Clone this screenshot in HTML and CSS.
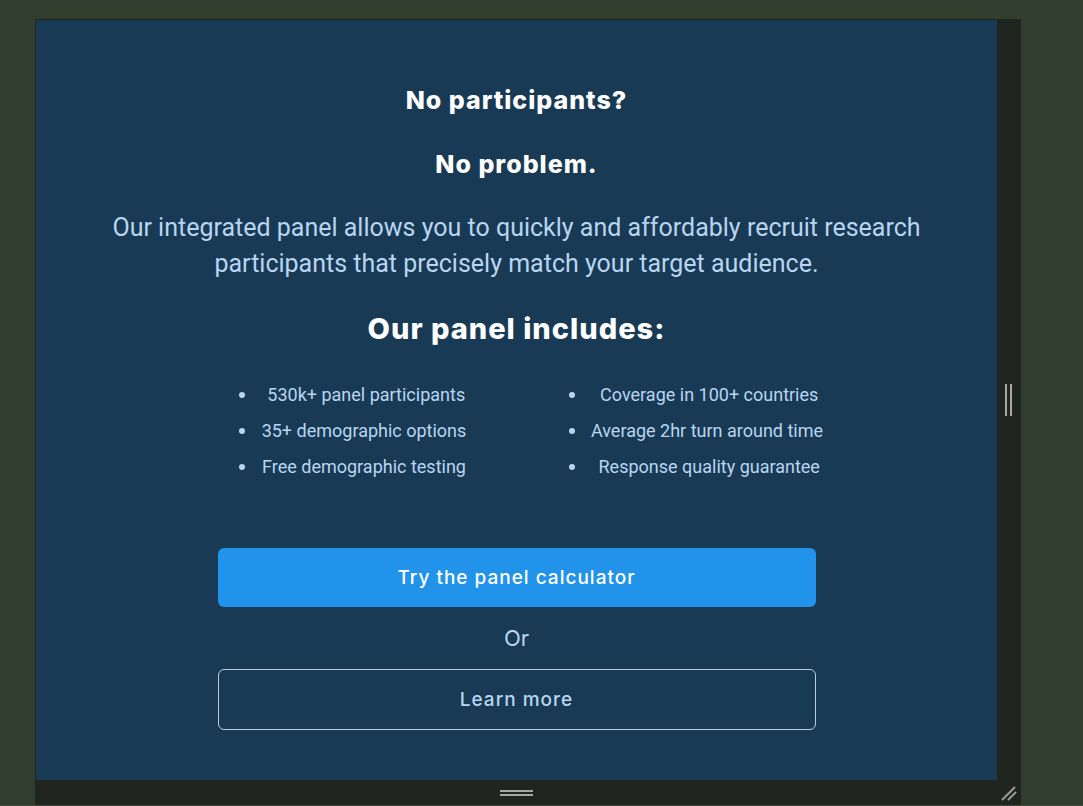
FILE: index.html
```html
<!DOCTYPE html>
<html>
<head>
<meta charset="utf-8">
<link rel="stylesheet" href="styles.css">
</head>
<body>
<div class="page">
  <div class="frame">
    <div class="main">
      <div class="panel">
        <h1 class="title">No participants?</h1>
        <h1 class="title title-second">No problem.</h1>
        <p class="lead">Our integrated panel allows you to quickly and affordably recruit research participants that precisely match your target audience.</p>
        <h2 class="subtitle">Our panel includes:</h2>
        <div class="lists">
          <ul class="list list-left">
            <li>&nbsp;530k+ panel participants</li>
            <li>35+ demographic options</li>
            <li>Free demographic testing</li>
          </ul>
          <ul class="list list-right">
            <li>&nbsp;Coverage in 100+ countries</li>
            <li>Average 2hr turn around time</li>
            <li>&nbsp;Response quality guarantee</li>
          </ul>
        </div>
        <a class="btn btn-primary">Try the panel calculator</a>
        <div class="or">Or</div>
        <a class="btn btn-outline">Learn more</a>
      </div>
      <div class="side">
        <span class="vgrip"></span>
      </div>
    </div>
    <div class="bottom">
      <span class="hgrip"></span>
      <svg class="resize" width="16" height="16" viewBox="0 0 16 16">
        <line x1="1" y1="15" x2="14" y2="2" stroke="#9a9c97" stroke-width="2"/>
        <line x1="7" y1="15" x2="15" y2="7" stroke="#9a9c97" stroke-width="2"/>
      </svg>
    </div>
  </div>
  <div class="baseline"></div>
</div>
</body>
</html>
```
FILE: styles.css
```css
html, body {
  margin: 0;
  padding: 0;
  background: #313e2e;
  height: 806px;
  overflow: hidden;
}
.page {
  display: flex;
  flex-direction: column;
  height: 806px;
  padding-top: 19px;
  box-sizing: border-box;
}
.frame {
  margin-left: 35px;
  width: 986px;
  height: 786px;
  background: #21251f;
  box-sizing: border-box;
  padding: 1px 0 0 1px;
  display: flex;
  flex-direction: column;
}
.main {
  display: flex;
  height: 760px;
}
.panel {
  width: 961px;
  height: 760px;
  background: #193a54;
  box-sizing: border-box;
  padding-top: 62px;
  display: flex;
  flex-direction: column;
  align-items: center;
  font-family: Roboto, "Liberation Sans", sans-serif;
}
.side {
  flex: 1;
  display: flex;
  align-items: center;
  justify-content: center;
}
.vgrip {
  display: block;
  width: 3px;
  height: 32px;
  border-left: 2px solid #a6a8a3;
  border-right: 2px solid #a6a8a3;
  margin-left: -1px;
}
.bottom {
  height: 25px;
  position: relative;
  display: flex;
  align-items: center;
  justify-content: center;
}
.hgrip {
  display: block;
  width: 33px;
  height: 2px;
  border-top: 2px solid #a6a8a3;
  border-bottom: 2px solid #a6a8a3;
  margin-left: -25px;
}
.resize {
  position: absolute;
  right: 4px;
  bottom: 4px;
}
.baseline {
  height: 1px;
  background: #45483f;
}
.title {
  margin: 0;
  font-family: Inter, "Open Sans", sans-serif;
  font-weight: 800;
  font-size: 25px;
  line-height: 36px;
  color: #ffffff;
  letter-spacing: 1px;
}
.title-second {
  margin-top: 28px;
}
.lead {
  margin: 28px 0 0;
  width: 860px;
  text-align: center;
  font-size: 25px;
  line-height: 36px;
  color: #b8d5f1;
}
.subtitle {
  margin: 27px 0 0;
  font-family: Inter, "Open Sans", sans-serif;
  font-weight: 800;
  font-size: 29px;
  line-height: 40px;
  letter-spacing: 1px;
  color: #ffffff;
}
.lists {
  margin-top: 27px;
  display: flex;
  gap: 118px;
  margin-left: 51px;
}
.list {
  margin: 0;
  padding: 0;
  list-style: disc outside;
  color: #b8d5f1;
  font-size: 18px;
  line-height: 36px;
  text-align: center;
}
.list li {
  height: 36px;
}
.list li::marker {
  font-size: 21px;
}
.list-left { width: 212px; }
.list-right { width: 238px; }
.btn {
  display: flex;
  align-items: center;
  justify-content: center;
  width: 598px;
  box-sizing: border-box;
  border-radius: 6px;
  font-family: Inter, "Open Sans", sans-serif;
  font-weight: 500;
  font-size: 19px;
  letter-spacing: 1px;
}
.btn-primary {
  margin-top: 64px;
  height: 59px;
  background: #2293ea;
  color: #ffffff;
}
.or {
  margin-top: 16px;
  font-family: Inter, "Open Sans", sans-serif;
  font-size: 22px;
  line-height: 30px;
  color: #b8d5f1;
}
.btn-outline {
  margin-top: 16px;
  height: 61px;
  border: 1px solid #b8cfe3;
  color: #b8d5f1;
}
```
